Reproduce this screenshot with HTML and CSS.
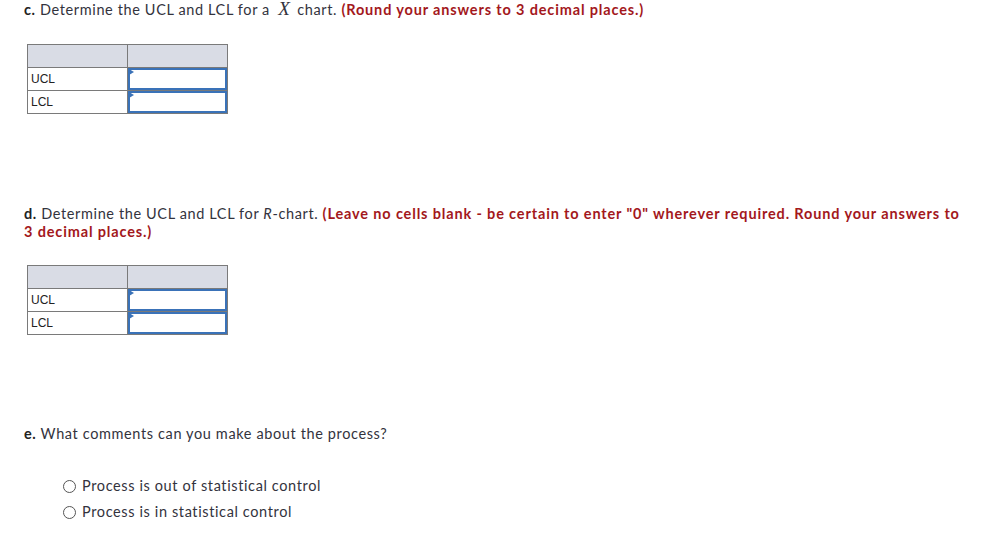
FILE: index.html
```html
<!DOCTYPE html>
<html>
<head>
<meta charset="utf-8">
<link rel="stylesheet" href="styles.css">
</head>
<body>
<div class="page">
  <p class="q q-c"><b>c.</b> Determine the UCL and LCL for a <span class="xbar">X</span> chart. <strong class="red">(Round your answers to 3 decimal places.)</strong></p>
  <table class="grid grid-c">
    <tr class="head"><td></td><td></td></tr>
    <tr><td class="lab">UCL</td><td class="in"><div class="box"></div></td></tr>
    <tr><td class="lab">LCL</td><td class="in"><div class="box"></div></td></tr>
  </table>

  <p class="q q-d"><b>d.</b> Determine the UCL and LCL for <i>R</i>-chart. <strong class="red">(Leave no cells blank - be certain to enter "0" wherever required. Round your answers to 3 decimal places.)</strong></p>
  <table class="grid grid-d">
    <tr class="head"><td></td><td></td></tr>
    <tr><td class="lab">UCL</td><td class="in"><div class="box"></div></td></tr>
    <tr><td class="lab">LCL</td><td class="in"><div class="box"></div></td></tr>
  </table>

  <p class="q q-e"><b>e.</b> What comments can you make about the process?</p>
  <div class="opts">
    <label class="opt"><span class="radio"></span>Process is out of statistical control</label>
    <label class="opt"><span class="radio"></span>Process is in statistical control</label>
  </div>
</div>
</body>
</html>
```

FILE: styles.css
```css
html, body {
  margin: 0;
  padding: 0;
  background: #fff;
}
.page {
  padding: 1px 0 0 24px;
  width: 945px;
  font-family: Lato, "Open Sans", sans-serif;
  font-size: 14.5px;
  letter-spacing: 0.62px;
  color: #33333d;
}
.q {
  margin: 0;
  line-height: 18px;
}
.q b {
  font-weight: 700;
  color: #222;
}
.red {
  color: #a3181c;
  font-weight: 700;
  letter-spacing: 0.85px;
}
.xbar {
  font-family: "Liberation Serif", serif;
  font-style: italic;
  font-size: 19px;
  line-height: 16px;
  padding: 0 3px 0 4px;
  letter-spacing: 0;
}
.grid {
  border-collapse: collapse;
  margin-left: 3px;
  font-family: "Liberation Sans", Arial, sans-serif;
  font-size: 12px;
  letter-spacing: 0;
  color: #222;
}
.grid td {
  border: 1px solid #7a7a7a;
  width: 100px;
  height: 23px;
  padding: 0;
  box-sizing: border-box;
}
.grid .head td {
  background: #d9dce5;
}
.grid td.lab {
  padding-left: 3px;
}
.grid td.in {
  position: relative;
}
.box {
  height: 18px;
  border: 2px solid #3a72b8;
  position: relative;
}
.box::before {
  content: "";
  position: absolute;
  left: -1px;
  top: -1px;
  border-left: 5px solid #3a72b8;
  border-top: 3px solid transparent;
  border-bottom: 3px solid transparent;
}
.grid-c { margin-top: 25px; }
.q-d { margin-top: 91px; }
.grid-d { margin-top: 24px; }
.q-e { margin-top: 90px; }
.opts {
  margin-top: 34px;
  margin-left: 39px;
  display: flex;
  flex-direction: column;
  gap: 8px;
}
.opt {
  display: flex;
  align-items: center;
  line-height: 18px;
}
.radio {
  width: 11px;
  height: 11px;
  border: 1px solid #555;
  border-radius: 50%;
  margin-right: 6px;
  box-sizing: content-box;
}
```
